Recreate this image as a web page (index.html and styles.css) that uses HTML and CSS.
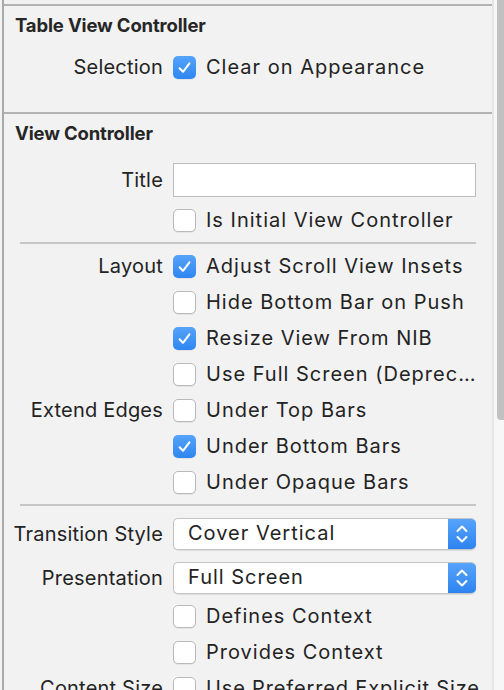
FILE: index.html
```html
<!DOCTYPE html>
<html>
<head>
<meta charset="utf-8">
<link rel="stylesheet" href="styles.css">
</head>
<body>
<div class="inspector">
  <div class="panel">
    <section class="section section-first">
      <h2 class="section-title">Table View Controller</h2>
      <div class="row row-first">
        <span class="label">Selection</span>
        <span class="check on"><svg viewBox="0 0 23 23"><path d="M6.6 12.2 L10 15.8 L16.4 7.4"/></svg></span>
        <span class="text">Clear on Appearance</span>
      </div>
    </section>
    <section class="section">
      <h2 class="section-title">View Controller</h2>
      <div class="field">
        <span class="label">Title</span>
        <span class="input"></span>
      </div>
      <div class="row row-after-field">
        <span class="label"></span>
        <span class="check"></span>
        <span class="text">Is Initial View Controller</span>
      </div>
      <div class="divider"></div>
      <div class="row">
        <span class="label">Layout</span>
        <span class="check on"><svg viewBox="0 0 23 23"><path d="M6.6 12.2 L10 15.8 L16.4 7.4"/></svg></span>
        <span class="text">Adjust Scroll View Insets</span>
      </div>
      <div class="row">
        <span class="label"></span>
        <span class="check"></span>
        <span class="text">Hide Bottom Bar on Push</span>
      </div>
      <div class="row">
        <span class="label"></span>
        <span class="check on"><svg viewBox="0 0 23 23"><path d="M6.6 12.2 L10 15.8 L16.4 7.4"/></svg></span>
        <span class="text">Resize View From NIB</span>
      </div>
      <div class="row">
        <span class="label"></span>
        <span class="check"></span>
        <span class="text">Use Full Screen (Deprec…</span>
      </div>
      <div class="row">
        <span class="label">Extend Edges</span>
        <span class="check"></span>
        <span class="text">Under Top Bars</span>
      </div>
      <div class="row">
        <span class="label"></span>
        <span class="check on"><svg viewBox="0 0 23 23"><path d="M6.6 12.2 L10 15.8 L16.4 7.4"/></svg></span>
        <span class="text">Under Bottom Bars</span>
      </div>
      <div class="row">
        <span class="label"></span>
        <span class="check"></span>
        <span class="text">Under Opaque Bars</span>
      </div>
      <div class="divider divider-lower"></div>
      <div class="field popup-row">
        <span class="label">Transition Style</span>
        <span class="popup"><span class="popup-value">Cover Vertical</span><span class="popup-arrows"><svg viewBox="0 0 28 32"><path d="M9.5 13 L14 8.5 L18.5 13"/><path d="M9.5 19 L14 23.5 L18.5 19"/></svg></span></span>
      </div>
      <div class="field popup-row popup-row-second">
        <span class="label">Presentation</span>
        <span class="popup"><span class="popup-value">Full Screen</span><span class="popup-arrows"><svg viewBox="0 0 28 32"><path d="M9.5 13 L14 8.5 L18.5 13"/><path d="M9.5 19 L14 23.5 L18.5 19"/></svg></span></span>
      </div>
      <div class="row row-after-field">
        <span class="label"></span>
        <span class="check"></span>
        <span class="text">Defines Context</span>
      </div>
      <div class="row">
        <span class="label"></span>
        <span class="check"></span>
        <span class="text">Provides Context</span>
      </div>
      <div class="row">
        <span class="label">Content Size</span>
        <span class="check"></span>
        <span class="text text-tight">Use Preferred Explicit Size</span>
      </div>
    </section>
  </div>
  <div class="scrollbar"><div class="thumb"></div></div>
</div>
</body>
</html>
```
FILE: styles.css
```css
* { box-sizing: border-box; }
html, body {
  margin: 0;
  padding: 0;
  height: 100%;
  overflow: hidden;
  background: #f2f2f2;
}
body {
  font-family: Inter, "Liberation Sans", sans-serif;
  color: #232323;
}
.inspector {
  display: flex;
  height: 690px;
  padding-left: 2px;
}
.panel {
  flex: 1;
  border-left: 2px solid #a9a9a9;
  padding-top: 4px;
  overflow: hidden;
}
.section-first {
  border-top: 2px solid #b3b3b3;
  border-bottom: 2px solid #b3b3b3;
  padding-bottom: 27px;
}
.section {
  padding-top: 8px;
}
.section-title {
  margin: 0 0 0 11px;
  font-size: 18.5px;
  font-weight: 700;
  letter-spacing: -0.15px;
  line-height: 22px;
  color: #262626;
}
.row {
  display: grid;
  grid-template-columns: 159px 23px 1fr;
  column-gap: 10px;
  align-items: center;
  height: 36px;
  padding-right: 16px;
}
.row-first { margin-top: 13px; }
.label {
  text-align: right;
  font-size: 20px;
  letter-spacing: 0.2px;
  line-height: 36px;
  white-space: nowrap;
}
.text {
  font-size: 20px;
  letter-spacing: 1px;
  line-height: 36px;
  white-space: nowrap;
}
.text-tight { letter-spacing: 0.85px; }
.check {
  width: 23px;
  height: 23px;
  border-radius: 5px;
  background: #fff;
  border: 1px solid #b9b9b9;
  box-shadow: 0 1px 0 rgba(0,0,0,0.06);
  display: block;
}
.check.on {
  border: none;
  background: linear-gradient(#55a3fa, #2f86f1);
}
.check svg {
  display: block;
  width: 23px;
  height: 23px;
}
.check path {
  fill: none;
  stroke: #fff;
  stroke-width: 2;
  stroke-linecap: round;
  stroke-linejoin: round;
}
.field {
  display: grid;
  grid-template-columns: 159px 1fr;
  column-gap: 10px;
  align-items: center;
  height: 34px;
  margin-top: 18px;
  padding-right: 16px;
}
.input {
  display: block;
  height: 34px;
  background: #fff;
  border: 1px solid #bdbdbd;
}
.row-after-field { margin-top: 6px; }
.divider {
  height: 2px;
  background: #c6c6c6;
  margin: 4px 16px 4px 16px;
}
.divider-lower { margin-bottom: 0; }
.popup-row {
  height: 32px;
  margin-top: 10px;
}
.popup-row-second { margin-top: 12px; }
.popup {
  display: flex;
  height: 32px;
  background: #fff;
  border: 1px solid #c4c4c4;
  border-right: none;
  border-radius: 5px;
  box-shadow: 0 1px 1px rgba(0,0,0,0.08);
  overflow: hidden;
}
.popup-value {
  flex: 1;
  padding-left: 14px;
  font-size: 20px;
  letter-spacing: 1px;
  line-height: 29px;
  white-space: nowrap;
}
.popup-arrows {
  width: 28px;
  margin-top: -1px;
  margin-bottom: -1px;
  background: linear-gradient(#58a5fb, #2c82f0);
}
.popup-arrows svg {
  display: block;
  width: 28px;
  height: 32px;
}
.popup-arrows path {
  fill: none;
  stroke: #fff;
  stroke-width: 2;
  stroke-linecap: round;
  stroke-linejoin: round;
}
.scrollbar {
  width: 12px;
  border-left: 2px solid #e5e5e5;
  background: #f7f7f7;
  position: relative;
}
.thumb {
  position: absolute;
  top: -10px;
  right: 0;
  width: 7px;
  height: 430px;
  background: #c1c1c1;
  border-radius: 4px 0 0 4px;
}
```
